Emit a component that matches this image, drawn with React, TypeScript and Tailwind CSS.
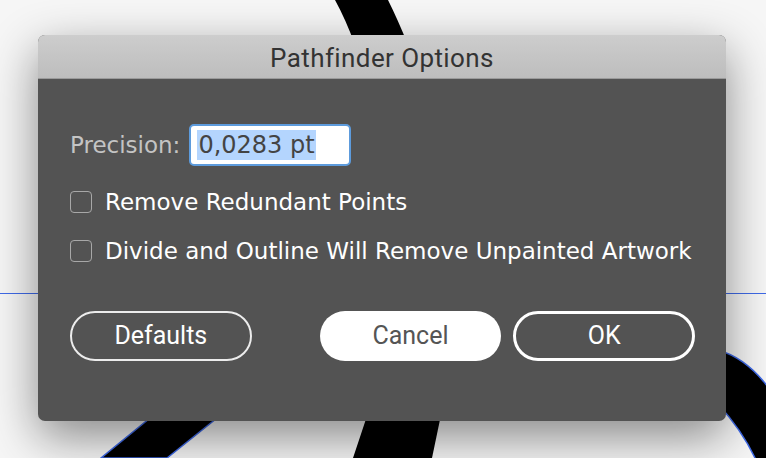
export default function App() {
  return (
    <div className="relative w-[766px] h-[458px] overflow-hidden bg-[#f6f6f6]">
      {/* artboard behind the dialog */}
      <svg className="absolute inset-0" width="766" height="458" viewBox="0 0 766 458">
        <line x1="0" y1="293.5" x2="766" y2="293.5" stroke="#3f6ae8" strokeWidth="1" />
        <path d="M335 0 L388 0 Q398 20 408 45 L355 45 Q346 20 335 0 Z" fill="#000" />
        <path d="M369 410 L442 410 L432 458 L353 458 Z" fill="#000" />
        <path
          d="M155 414 L222 414 L167 458 L101 458 Z"
          fill="#000"
          stroke="#3f6ae8"
          strokeWidth="1.5"
        />
        <path
          d="M718 350 Q746 358 768 387 L768 460 L756 460 Q742 430 718 404 Z"
          fill="#000"
          stroke="#3f6ae8"
          strokeWidth="1.5"
        />
      </svg>

      <div className="relative pt-[35px] pl-[38px]">
        <div className="w-[688px] h-[386px] flex flex-col rounded-[7px] overflow-hidden bg-[#535353] shadow-[0_16px_48px_rgba(0,0,0,0.45)]">
          <div className="h-[44px] shrink-0 flex items-center justify-center pt-[4px] bg-gradient-to-b from-[#cdcdcd] to-[#bdbdbd] border-b border-[#9a9a9a] font-['Roboto',sans-serif] text-[26px] tracking-[0.4px] text-[#333]">
            Pathfinder Options
          </div>

          <div className="flex flex-col pt-[45px] px-[31px] font-['DejaVu_Sans',sans-serif] text-[23px]">
            <div className="flex items-center h-[42px] gap-[9px]">
              <span className="text-[#c4c4c4] pl-[1px]">Precision:</span>
              <div className="w-[162px] h-[42px] rounded-[5px] border-2 border-[#5d9bdc] bg-white flex items-center px-[6px]">
                <span className="bg-[#b4d5fe] text-[#444] text-[24px] leading-[30px] px-[1px]">0,0283 pt</span>
              </div>
            </div>

            <div className="flex flex-col gap-[19px] mt-[21px]">
              <label className="flex items-center h-[30px] gap-[13px] text-white">
                <span className="w-[22px] h-[22px] shrink-0 rounded-[4px] border-[1.5px] border-[#a8a8a8] ml-[1px]" />
                Remove Redundant Points
              </label>
              <label className="flex items-center h-[30px] gap-[13px] text-white whitespace-nowrap">
                <span className="w-[22px] h-[22px] shrink-0 rounded-[4px] border-[1.5px] border-[#a8a8a8] ml-[1px]" />
                Divide and Outline Will Remove Unpainted Artwork
              </label>
            </div>

            <div className="flex items-center mt-[45px] font-['Roboto',sans-serif] text-[25px]">
              <button className="w-[182px] h-[50px] ml-[1px] rounded-full border-2 border-[#ececec] text-white">
                Defaults
              </button>
              <button className="w-[182px] h-[50px] ml-[68px] rounded-full bg-white text-[#555]">
                Cancel
              </button>
              <button className="w-[182px] h-[50px] ml-[12px] rounded-full border-[3px] border-white text-white">
                OK
              </button>
            </div>
          </div>
        </div>
      </div>
    </div>
  );
}
